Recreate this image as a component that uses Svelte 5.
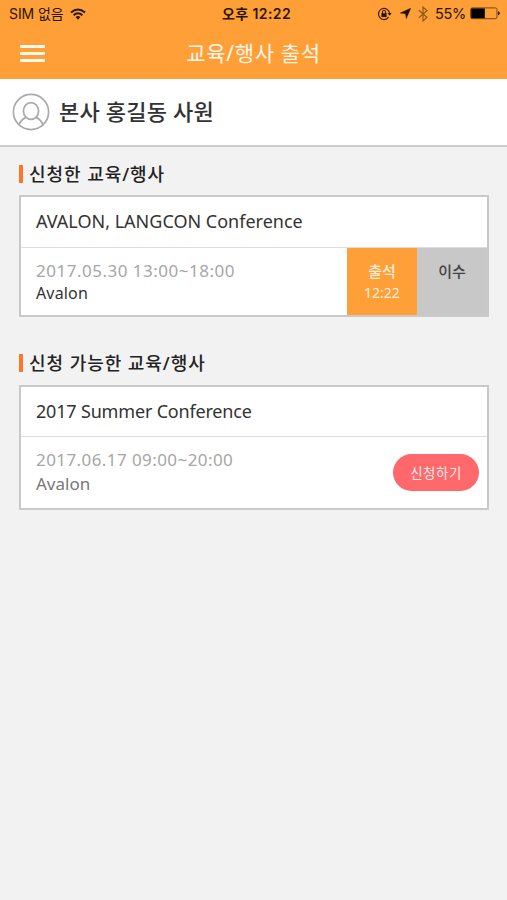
<script>
  const applied = { title: 'AVALON, LANGCON Conference', date: '2017.05.30 13:00~18:00', place: 'Avalon' };
  const available = { title: '2017 Summer Conference', date: '2017.06.17 09:00~20:00', place: 'Avalon' };
</script>

<div class="screen">
  <header>
    <div class="status">
      <div class="carrier">
        <span class="sim">SIM 없음</span>
        <svg width="16" height="12" viewBox="0 0 16 12" fill="none" stroke="#2b1600" stroke-width="2">
          <path d="M1 4.5Q8-1.4 15 4.5M3.6 7.2Q8 3.4 12.4 7.2" />
          <path d="M5.6 9.1Q8 7.1 10.4 9.1L8 11.7Z" fill="#2b1600" stroke="none" />
        </svg>
      </div>
      <span class="clock">오후 12:22</span>
      <div class="indicators">
        <svg width="15" height="14" viewBox="0 0 15 14">
          <path d="M11.6 10.2A5.6 5.6 0 1 1 12.6 6.4" fill="none" stroke="#3a1d00" stroke-width="1.2" />
          <path d="M10.6 6h4l-2 2.8z" fill="#2b1600" />
          <rect x="4.4" y="6.2" width="5.2" height="3.8" fill="#2b1600" />
          <path d="M5.4 6.5V5a1.6 1.6 0 0 1 3.2 0v1.5" fill="none" stroke="#2b1600" />
        </svg>
        <svg class="arrow" width="11" height="11" viewBox="0 0 11 11"><path d="M10.7.2L6.3 10.6 5.5 5.8.2 5z" fill="#1c0e00" stroke="#1c0e00" stroke-width=".4" /></svg>
        <svg class="bluetooth" width="10" height="16" viewBox="0 0 10 16"><path d="M.8 4.2l8.2 7.1-4 3.7V1l4 3.7-8.2 7.1" fill="none" stroke="#8f581b" stroke-width="1.2" /></svg>
        <span class="percent">55%</span>
        <svg class="battery" width="30" height="13" viewBox="0 0 30 13">
          <rect x=".6" y=".9" width="26.4" height="10.8" rx="1.8" fill="none" stroke="#764715" stroke-width="1" />
          <path d="M1.2 1.4h13.6v9.8H1.2z" fill="#000" />
          <path d="M28 4.3q1.8.4 1.8 2T28 8.3z" fill="#2b1600" />
        </svg>
      </div>
    </div>
    <div class="nav">
      <div class="menu"><i></i><i></i><i></i></div>
      <h1>교육/행사 출석</h1>
    </div>
  </header>

  <div class="profile">
    <svg width="38" height="38" viewBox="0 0 38 38" fill="none" stroke="#aaa" stroke-width="1.7">
      <circle cx="19" cy="19" r="17.6" />
      <ellipse cx="19" cy="18" rx="7.6" ry="8.4" />
      <path d="M7 32C8.2 28.3 10.5 25.8 14.2 24.4M31 32C29.8 28.3 27.5 25.8 23.8 24.4" />
    </svg>
    <span class="name">본사 홍길동 사원</span>
  </div>

  <section>
    <h2><b></b><span>신청한 교육/행사</span></h2>
    <article>
      <div class="title">{applied.title}</div>
      <div class="body first">
        <div class="info">
          <span class="date">{applied.date}</span>
          <span class="place dark">{applied.place}</span>
        </div>
        <div class="cell attend"><span>출석</span><small>12:22</small></div>
        <div class="cell done"><span>이수</span></div>
      </div>
    </article>
  </section>

  <section class="second">
    <h2><b></b><span>신청 가능한 교육/행사</span></h2>
    <article>
      <div class="title">{available.title}</div>
      <div class="body last">
        <div class="info">
          <span class="date">{available.date}</span>
          <span class="place">{available.place}</span>
        </div>
        <button>신청하기</button>
      </div>
    </article>
  </section>
</div>

<style>
  :global(body) { background: #f2f2f2; }
  .screen {
    width: 507px; height: 900px; overflow: hidden; background: #f2f2f2;
    font-family: "Noto Sans", "Noto Sans CJK KR", sans-serif; white-space: nowrap; color: #333;
  }
  .screen * { box-sizing: border-box; }
  svg { display: block; flex: none; }
  header { height: 79px; background: #ff9f37; }
  .status {
    height: 27px; display: grid; grid-template-columns: 1fr auto 1fr; align-items: center;
    padding: 0 7px 0 9px; font-family: "Inter", "Noto Sans CJK KR", sans-serif; color: #2b1600; line-height: 27px;
  }
  .carrier, .indicators { display: flex; align-items: center; }
  .indicators { justify-content: flex-end; }
  .sim { font-size: 14px; width: 61px; letter-spacing: -.1px; }
  .clock { font-size: 14px; font-weight: 600; letter-spacing: .4px; padding-left: 4px; }
  .arrow { margin-left: 8px; }
  .bluetooth { margin-left: 7px; }
  .percent { font-size: 14.5px; margin-left: 7px; letter-spacing: -.3px; }
  .battery { margin-left: 4px; }
  .nav { height: 52px; display: grid; grid-template-columns: 45px 1fr 45px; align-items: center; }
  .menu { padding-left: 20px; display: flex; flex-direction: column; gap: 4px; }
  .menu i { display: block; width: 25px; height: 3px; flex: none; background: #fff8ef; border-radius: 1px; }
  h1 { margin: 0; font-size: 21px; font-weight: 400; letter-spacing: .65px; line-height: 50px; color: #fff5e9; text-align: center; }
  .profile {
    height: 68px; background: #fff; border-bottom: 2px solid #ccc;
    display: flex; align-items: center; padding-left: 12px;
  }
  .name { margin-left: 9px; font-size: 22px; font-weight: 500; letter-spacing: .2px; line-height: 60px; padding-bottom: 3px; }
  section { padding: 12px 18px 0 19px; }
  .second { padding-top: 31px; }
  h2 { margin: 0 0 6px; height: 30px; display: flex; align-items: center; font-size: 18px; font-weight: 500; letter-spacing: .95px; color: #222; line-height: 30px; }
  .second h2 { margin-bottom: 7px; }
  h2 b { width: 4px; height: 18px; background: #ff762b; margin-right: 6px; }
  article { border: 2px solid #c9c9c9; background: #fff; }
  .title { height: 51px; border-bottom: 1px solid #ddd; padding-left: 15px; font-size: 18px; line-height: 49px; }
  .second .title { height: 50px; letter-spacing: -.18px; }
  .body { display: flex; }
  .first { height: 67px; }
  .last { height: 71px; align-items: center; }
  .info { flex: 1; display: flex; flex-direction: column; padding: 12px 0 0 15px; align-self: flex-start; }
  .date { font-size: 17px; color: #a6a6a6; line-height: 22px; letter-spacing: .5px; }
  .second .date { letter-spacing: .42px; }
  .place { font-size: 17px; color: #777; line-height: 26px; }
  .place.dark { font-size: 16px; color: #333; line-height: 22px; letter-spacing: .15px; }
  .cell { display: flex; flex-direction: column; align-items: center; padding-top: 12px; font-size: 15px; font-weight: 500; line-height: 22px; width: 70px; }
  .attend { background: #ff9f37; color: #ffeedc; }
  .attend small { font-size: 14px; font-weight: 400; }
  .done { background: #c8c8c8; color: #444; }
  button {
    width: 86px; height: 37px; margin-right: 8px; padding: 0; border: 0; border-radius: 19px;
    background: #ff696b; color: #ffeaea; font: 400 13.5px/36px "Noto Sans", "Noto Sans CJK KR", sans-serif; letter-spacing: .5px;
  }
</style>
